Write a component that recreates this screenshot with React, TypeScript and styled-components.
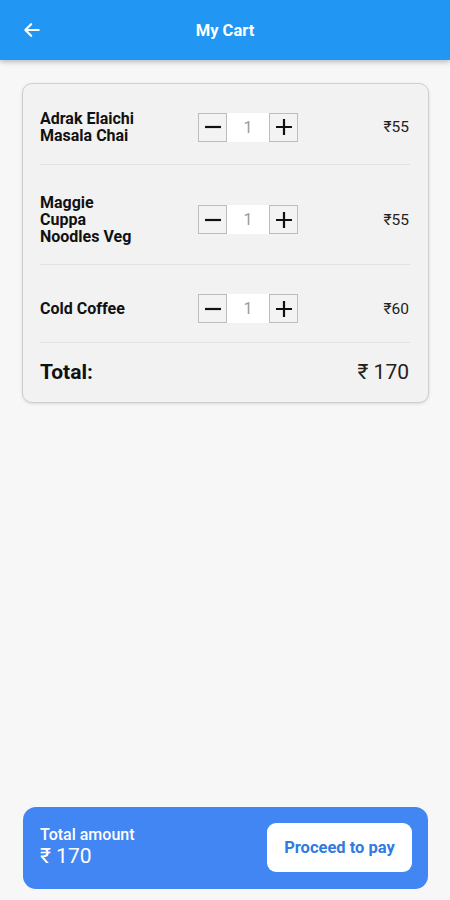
import React, { useState } from "react"
import styled, { createGlobalStyle } from "styled-components"

const GlobalStyle = createGlobalStyle`
	html, body {
		margin: 0;
		padding: 0;
		background: #f7f7f7;
		font-family: Roboto, "Liberation Sans", Arial, sans-serif;
	}
`

const Page = styled.div`
	display: flex;
	flex-direction: column;
	min-height: 100vh;
	background: #f7f7f7;
`

const Header = styled.header`
	display: flex;
	align-items: center;
	height: 60px;
	padding: 0 14px;
	background: #2196f3;
	box-shadow: 0 2px 5px rgba(0, 0, 0, 0.25);
	position: relative;
	z-index: 1;
`

const BackButton = styled.button`
	display: flex;
	align-items: center;
	justify-content: center;
	width: 36px;
	height: 36px;
	padding: 0;
	border: none;
	background: transparent;
	cursor: pointer;
`

const Title = styled.h1`
	flex: 1;
	margin: 0 36px 0 0;
	text-align: center;
	color: #fff;
	font-size: 16.5px;
	font-weight: 700;
`

const Content = styled.main`
	padding: 23px 21px 0 22px;
`

const Card = styled.div`
	padding: 0 18px 0 17px;
	background: #f2f2f2;
	border: 1px solid #cfcfcf;
	border-radius: 10px;
	box-shadow: 0 1px 3px rgba(0, 0, 0, 0.12);
`

const ItemRow = styled.div`
	display: grid;
	grid-template-columns: 158px auto 1fr;
	align-items: center;
	padding: 29px 1px 19px 0;
	border-bottom: 1px solid #e2e2e2;

	&:first-child {
		padding-top: 26px;
		padding-bottom: 20px;
	}
`

const ItemName = styled.div`
	max-width: 100px;
	color: #111;
	font-size: 16px;
	font-weight: 700;
	line-height: 17px;
`

const Stepper = styled.div`
	display: flex;
	align-items: stretch;
	height: 29px;
`

const StepButton = styled.button`
	display: flex;
	align-items: center;
	justify-content: center;
	width: 29px;
	padding: 0;
	background: #f3f3f3;
	border: 1px solid #bdbdbd;
	cursor: pointer;
`

const Qty = styled.span`
	display: flex;
	align-items: center;
	justify-content: center;
	width: 42px;
	background: #fff;
	color: #9a9a9a;
	font-size: 16px;
`

const Price = styled.div`
	justify-self: end;
	color: #222;
	font-size: 15.5px;
`

const TotalRow = styled.div`
	display: flex;
	justify-content: space-between;
	align-items: center;
	padding: 17px 1px 18px 0;
	line-height: 24px;
`

const TotalLabel = styled.span`
	color: #111;
	font-size: 21px;
	font-weight: 700;
`

const TotalValue = styled.span`
	color: #222;
	font-size: 21px;
`

const PayBar = styled.div`
	display: flex;
	align-items: center;
	justify-content: space-between;
	margin: auto 22px 11px 23px;
	padding: 16px 16px 17px 17px;
	background: #4286f4;
	border-radius: 13px;
`

const AmountBlock = styled.div`
	display: flex;
	flex-direction: column;
	margin-top: -3px;
	color: #fff;
`

const AmountLabel = styled.span`
	font-size: 16px;
	font-weight: 500;
	line-height: 19px;
`

const AmountValue = styled.span`
	font-size: 21px;
	line-height: 24px;
`

const PayButton = styled.button`
	width: 145px;
	height: 49px;
	border: none;
	border-radius: 9px;
	background: #fff;
	color: #2f7be0;
	font-family: inherit;
	font-size: 16.5px;
	font-weight: 700;
	cursor: pointer;
`

const BackIcon = () => (
	<svg width="20" height="20" viewBox="0 0 24 24">
		<path d="M20 12H4M11 5l-7 7 7 7" fill="none" stroke="#fff" strokeWidth="2.6" strokeLinecap="round" strokeLinejoin="round" />
	</svg>
)

const MinusIcon = () => (
	<svg width="18" height="18" viewBox="0 0 18 18">
		<path d="M1 9h16" stroke="#111" strokeWidth="2.2" />
	</svg>
)

const PlusIcon = () => (
	<svg width="18" height="18" viewBox="0 0 18 18">
		<path d="M1 9h16M9 1v16" stroke="#111" strokeWidth="2.2" />
	</svg>
)

const initialItems = [
	{ id: "chai", name: "Adrak Elaichi Masala Chai", price: 55, qty: 1 },
	{ id: "maggie", name: "Maggie Cuppa Noodles Veg", price: 55, qty: 1 },
	{ id: "coffee", name: "Cold Coffee", price: 60, qty: 1 },
]

export default function App() {
	const [items, setItems] = useState(initialItems)

	const changeQty = (id: string, delta: number) => {
		setItems((prev) =>
			prev.map((item) => (item.id === id ? { ...item, qty: Math.max(0, item.qty + delta) } : item)),
		)
	}

	const total = items.reduce((sum, item) => sum + item.price * item.qty, 0)

	return (
		<>
			<GlobalStyle />
			<Page>
				<Header>
					<BackButton aria-label="Back">
						<BackIcon />
					</BackButton>
					<Title>My Cart</Title>
				</Header>
				<Content>
					<Card>
						{items.map((item) => (
							<ItemRow key={item.id}>
								<ItemName>{item.name}</ItemName>
								<Stepper>
									<StepButton onClick={() => changeQty(item.id, -1)}>
										<MinusIcon />
									</StepButton>
									<Qty>{item.qty}</Qty>
									<StepButton onClick={() => changeQty(item.id, 1)}>
										<PlusIcon />
									</StepButton>
								</Stepper>
								<Price>₹{item.price * item.qty}</Price>
							</ItemRow>
						))}
						<TotalRow>
							<TotalLabel>Total:</TotalLabel>
							<TotalValue>₹ {total}</TotalValue>
						</TotalRow>
					</Card>
				</Content>
				<PayBar>
					<AmountBlock>
						<AmountLabel>Total amount</AmountLabel>
						<AmountValue>₹ {total}</AmountValue>
					</AmountBlock>
					<PayButton>Proceed to pay</PayButton>
				</PayBar>
			</Page>
		</>
	)
}
